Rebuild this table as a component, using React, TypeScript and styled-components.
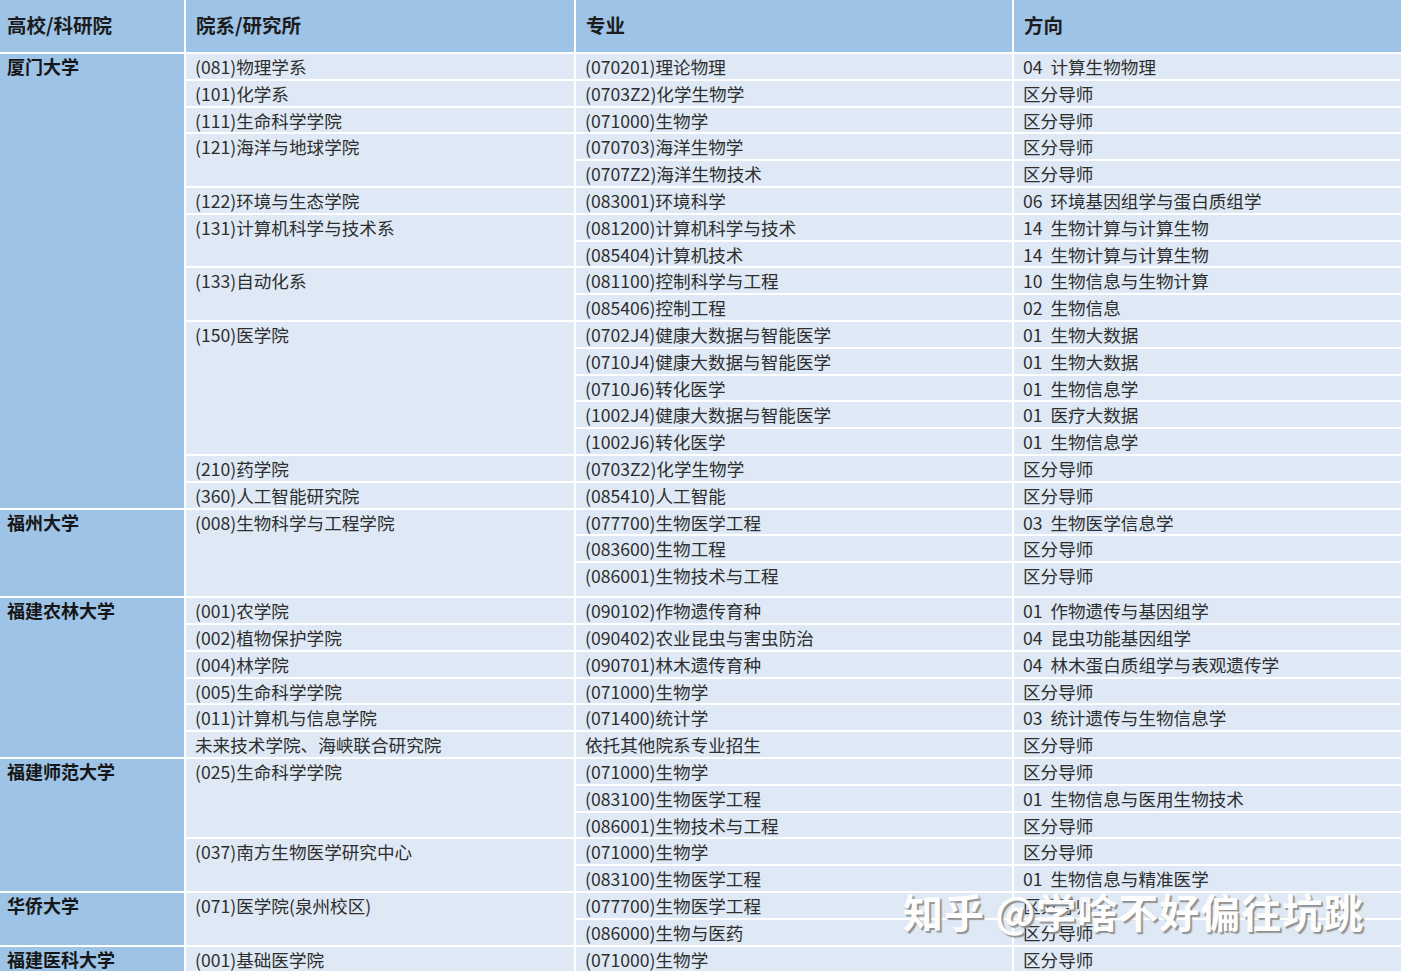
import React from "react";
import styled, { createGlobalStyle } from "styled-components";

const Global = createGlobalStyle`
  html, body { margin: 0; padding: 0; background: #ffffff; }
  body { font-family: "Noto Sans CJK SC", "Noto Sans", sans-serif; }
`;

type Major = { major: string; dir: string; tall?: boolean };
type Dept = { name: string; majors: Major[] };
type School = { name: string; depts: Dept[] };

const m = (major: string, dir: string, tall?: boolean): Major => ({ major, dir, tall });

const data: School[] = [
  {
    name: "厦门大学",
    depts: [
      { name: "(081)物理学系", majors: [m("(070201)理论物理", "04  计算生物物理")] },
      { name: "(101)化学系", majors: [m("(0703Z2)化学生物学", "区分导师")] },
      { name: "(111)生命科学学院", majors: [m("(071000)生物学", "区分导师")] },
      {
        name: "(121)海洋与地球学院",
        majors: [m("(070703)海洋生物学", "区分导师"), m("(0707Z2)海洋生物技术", "区分导师")],
      },
      { name: "(122)环境与生态学院", majors: [m("(083001)环境科学", "06  环境基因组学与蛋白质组学")] },
      {
        name: "(131)计算机科学与技术系",
        majors: [
          m("(081200)计算机科学与技术", "14  生物计算与计算生物"),
          m("(085404)计算机技术", "14  生物计算与计算生物"),
        ],
      },
      {
        name: "(133)自动化系",
        majors: [m("(081100)控制科学与工程", "10  生物信息与生物计算"), m("(085406)控制工程", "02  生物信息")],
      },
      {
        name: "(150)医学院",
        majors: [
          m("(0702J4)健康大数据与智能医学", "01  生物大数据"),
          m("(0710J4)健康大数据与智能医学", "01  生物大数据"),
          m("(0710J6)转化医学", "01  生物信息学"),
          m("(1002J4)健康大数据与智能医学", "01  医疗大数据"),
          m("(1002J6)转化医学", "01  生物信息学"),
        ],
      },
      { name: "(210)药学院", majors: [m("(0703Z2)化学生物学", "区分导师")] },
      { name: "(360)人工智能研究院", majors: [m("(085410)人工智能", "区分导师")] },
    ],
  },
  {
    name: "福州大学",
    depts: [
      {
        name: "(008)生物科学与工程学院",
        majors: [
          m("(077700)生物医学工程", "03  生物医学信息学"),
          m("(083600)生物工程", "区分导师"),
          m("(086001)生物技术与工程", "区分导师", true),
        ],
      },
    ],
  },
  {
    name: "福建农林大学",
    depts: [
      { name: "(001)农学院", majors: [m("(090102)作物遗传育种", "01  作物遗传与基因组学")] },
      { name: "(002)植物保护学院", majors: [m("(090402)农业昆虫与害虫防治", "04  昆虫功能基因组学")] },
      { name: "(004)林学院", majors: [m("(090701)林木遗传育种", "04  林木蛋白质组学与表观遗传学")] },
      { name: "(005)生命科学学院", majors: [m("(071000)生物学", "区分导师")] },
      { name: "(011)计算机与信息学院", majors: [m("(071400)统计学", "03  统计遗传与生物信息学")] },
      { name: "未来技术学院、海峡联合研究院", majors: [m("依托其他院系专业招生", "区分导师")] },
    ],
  },
  {
    name: "福建师范大学",
    depts: [
      {
        name: "(025)生命科学学院",
        majors: [
          m("(071000)生物学", "区分导师"),
          m("(083100)生物医学工程", "01  生物信息与医用生物技术"),
          m("(086001)生物技术与工程", "区分导师"),
        ],
      },
      {
        name: "(037)南方生物医学研究中心",
        majors: [m("(071000)生物学", "区分导师"), m("(083100)生物医学工程", "01  生物信息与精准医学")],
      },
    ],
  },
  {
    name: "华侨大学",
    depts: [
      {
        name: "(071)医学院(泉州校区)",
        majors: [m("(077700)生物医学工程", "区分导师"), m("(086000)生物与医药", "区分导师")],
      },
    ],
  },
  {
    name: "福建医科大学",
    depts: [{ name: "(001)基础医学院", majors: [m("(071000)生物学", "区分导师")] }],
  },
];

const Page = styled.div`
  position: relative;
  width: 1401px;
  height: 973px;
  overflow: hidden;
  background: #dee9f5;
`;

const Table = styled.table`
  width: 1401px;
  table-layout: fixed;
  border-collapse: collapse;
  border-spacing: 0;
`;

const HeadRow = styled.tr`
  height: 53px;
`;

const HeadCell = styled.th<{ $first?: boolean }>`
  background: #9dc3e6;
  color: #1c1c1c;
  font-size: 19.5px;
  font-weight: 700;
  text-align: left;
  vertical-align: middle;
  padding: 0 0 3px ${(p) => (p.$first ? "7px" : "10px")};
  border: 2px solid #ffffff;
  border-top: none;
  white-space: nowrap;
  &:first-child { border-left: none; }
  &:last-child { border-right: none; }
`;

const BodyRow = styled.tr<{ $tall?: boolean }>`
  height: ${(p) => (p.$tall ? "35px" : "26.8px")};
`;

const SchoolCell = styled.td`
  background: #9dc3e6;
  color: #161616;
  font-size: 18px;
  font-weight: 700;
  line-height: 23px;
  vertical-align: top;
  padding: 1px 0 0 7px;
  border: 2px solid #ffffff;
  border-left: none;
  white-space: nowrap;
`;

const Cell = styled.td`
  background: #dee9f5;
  color: #2e2e2e;
  font-size: 17.6px;
  font-weight: 400;
  line-height: 23px;
  vertical-align: top;
  padding: 1px 0 0 9px;
  border: 2px solid #ffffff;
  white-space: pre;
  overflow: hidden;
  &:last-child { border-right: none; }
`;

const Watermark = styled.div`
  position: absolute;
  left: 903px;
  top: 885px;
  font-size: 40px;
  font-weight: 700;
  line-height: 52px;
  color: #ffffff;
  letter-spacing: 1px;
  white-space: pre;
  text-shadow: 2px 2px 1px #8f8f8f, 1px 1px 0 #b4b4b4;
  opacity: 0.95;
  pointer-events: none;
`;

function renderRows() {
  const rows: React.ReactNode[] = [];
  data.forEach((school, si) => {
    const schoolSpan = school.depts.reduce((n, d) => n + d.majors.length, 0);
    let firstOfSchool = true;
    school.depts.forEach((dept, di) => {
      dept.majors.forEach((mj, mi) => {
        rows.push(
          <BodyRow key={`${si}-${di}-${mi}`} $tall={mj.tall}>
            {firstOfSchool && <SchoolCell rowSpan={schoolSpan}>{school.name}</SchoolCell>}
            {mi === 0 && <Cell rowSpan={dept.majors.length}>{dept.name}</Cell>}
            <Cell>{mj.major}</Cell>
            <Cell>{mj.dir}</Cell>
          </BodyRow>
        );
        firstOfSchool = false;
      });
    });
  });
  return rows;
}

export default function App() {
  return (
    <>
      <Global />
      <Page>
        <Table>
          <colgroup>
            <col style={{ width: 185 }} />
            <col style={{ width: 390 }} />
            <col style={{ width: 438 }} />
            <col style={{ width: 388 }} />
          </colgroup>
          <thead>
            <HeadRow>
              <HeadCell $first>高校/科研院</HeadCell>
              <HeadCell>院系/研究所</HeadCell>
              <HeadCell>专业</HeadCell>
              <HeadCell>方向</HeadCell>
            </HeadRow>
          </thead>
          <tbody>{renderRows()}</tbody>
        </Table>
        <Watermark>{"知乎 @学啥不好偏往坑跳"}</Watermark>
      </Page>
    </>
  );
}
